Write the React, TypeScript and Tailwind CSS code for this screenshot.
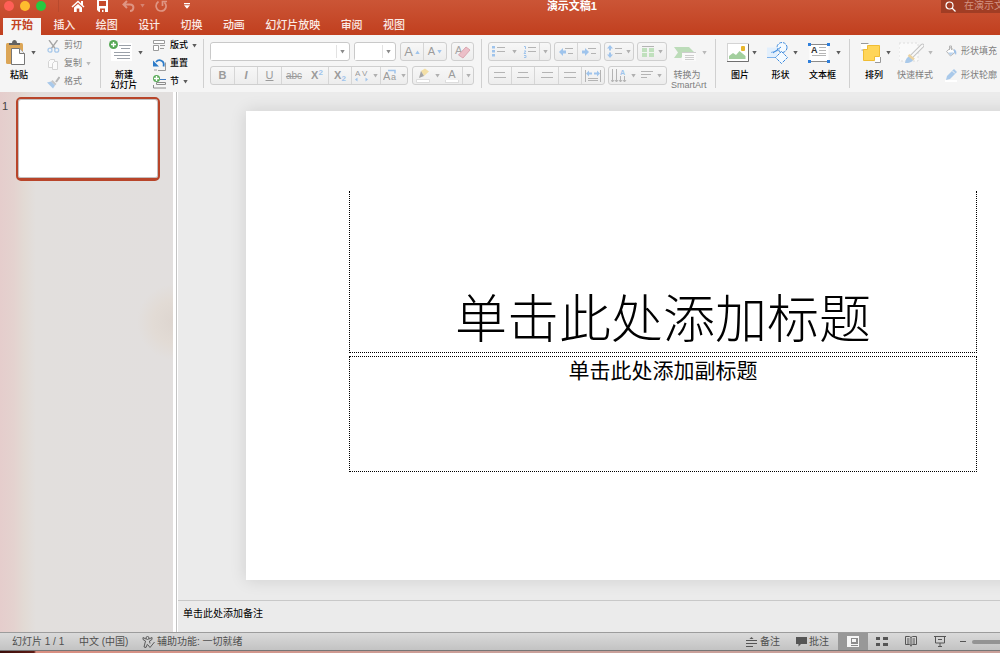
import { useState } from 'react';
import type { ReactNode } from 'react';
import clsx from 'clsx';

const TABS = ['开始', '插入', '绘图', '设计', '切换', '动画', '幻灯片放映', '审阅', '视图'];

const Caret = ({ className = 'text-[#5c5c5c]' }: { className?: string }) => (
  <svg className={clsx('shrink-0', className)} width="5" height="4" viewBox="0 0 5 4" fill="currentColor">
    <path d="M.3 0h4.400L2.500 3.600z" />
  </svg>
);

/* ---------- ribbon building blocks ---------- */

const Group = ({ className, children }: { className: string; children: ReactNode }) => (
  <div className={clsx('relative flex shrink-0 items-start', className)}>{children}</div>
);

const Divider = () => <div className="mt-[3px] h-[49px] w-px shrink-0 bg-[#d0d0d0]" />;

type BigProps = { icon: ReactNode; label: ReactNode; className?: string; disabled?: boolean };

const BigButton = ({ icon, label, className, disabled }: BigProps) => (
  <button
    disabled={disabled}
    className={clsx('flex shrink-0 flex-col items-stretch text-[9px] leading-[10px]', disabled ? 'text-[#7d7d7d]' : 'font-medium text-black', className)}
  >
    <span className="flex h-[34px] items-center justify-between">
      {icon}
      <Caret className={disabled ? 'text-[#b9b9b9]' : 'text-[#5c5c5c]'} />
    </span>
    <span className="block whitespace-nowrap pr-1 text-center">{label}</span>
  </button>
);

type SmallProps = { icon: ReactNode; label: string; caret?: boolean; disabled?: boolean; className?: string };

const SmallButton = ({ icon, label, caret, disabled, className = 'h-[18px]' }: SmallProps) => (
  <button
    disabled={disabled}
    className={clsx('flex items-center gap-1 whitespace-nowrap text-[9px]', disabled ? 'text-[#7d7d7d]' : 'font-medium text-black', className)}
  >
    {icon}
    <span>{label}</span>
    {caret && <Caret className={disabled ? 'text-[#b9b9b9]' : 'text-[#5c5c5c]'} />}
  </button>
);

const Segments = ({ className, children }: { className: string; children: ReactNode }) => (
  <div className={clsx('flex h-[19px] shrink-0 rounded-[3px] border border-[#cfcfcf] bg-linear-to-b from-[#f7f7f7] to-[#ededed]', className)}>
    {children}
  </div>
);

type SegProps = { label: string; className?: string; line?: boolean; children: ReactNode };

const Seg = ({ label, className = 'flex-1', line = true, children }: SegProps) => (
  <button
    disabled
    aria-label={label}
    className={clsx('flex items-center justify-center gap-1 text-[11px] leading-none text-[#9b9b9b]', line && 'border-r border-[#d6d6d6]', className)}
  >
    {children}
  </button>
);

const PickList = ({ label, className }: { label: string; className: string }) => (
  <div className={clsx('flex h-[19px] shrink-0 items-center rounded-[3px] border border-[#c9c9c9] bg-white pr-1', className)}>
    <select aria-label={label} className="h-4 min-w-0 flex-1 appearance-none bg-white text-[10px] outline-none" />
    <span className="mr-[3px] h-[13px] w-px bg-[#e2e2e2]" />
    <Caret className="text-[#8a8a8a]" />
  </div>
);

/* ---------- ribbon icons ---------- */

const PasteIcon = () => (
  <svg width="20" height="26" viewBox="0 0 20 26">
    <rect x="0" y="3" width="17" height="21" rx="1.5" fill="#dca657" />
    <path d="M3 5V3h3c0-4 5-4 5 0h3v2z" fill="#636363" />
    <path d="M5.500 8.500h8l5 5v11h-13z" fill="#fff" stroke="#777" />
    <path d="M13.500 8.500v5h5" fill="#eee" stroke="#777" />
  </svg>
);

const CutIcon = () => (
  <svg width="13" height="13" viewBox="0 0 13 13" fill="none">
    <path d="M2 0l6.500 9M10.500 0L4 9" stroke="#a5a5a5" strokeWidth="1.300" />
    <circle cx="3" cy="10.200" r="2" stroke="#a9c9ea" strokeWidth="1.300" />
    <circle cx="9.700" cy="10.200" r="2" stroke="#a9c9ea" strokeWidth="1.300" />
  </svg>
);

const CopyIcon = () => (
  <svg width="13" height="13" viewBox="0 0 13 13" fill="#fbfbfb" stroke="#d4d4d4">
    <path d="M1.500 3.500l2-2h4v8h-6z" />
    <path d="M5.500 5.500l2-2h3v8h-5z" />
  </svg>
);

const BrushIcon = () => (
  <svg width="13" height="13" viewBox="0 0 13 13">
    <path d="M12.500 1L9 6" stroke="#b5b5b5" strokeWidth="2" />
    <path d="M5.500 4l4 4-1.500 1.500-4-4z" fill="#c6c6c6" />
    <path d="M0 6.500l4-1L8 9.500 6 12.500z" fill="#a9c9ea" />
  </svg>
);

const Plus = ({ r = 4.5 }: { r?: number }) => (
  <g>
    <circle cx={r} cy={r} r={r} fill="#58a957" />
    <path d={`M${r} ${r - 2.5}v5M${r - 2.5} ${r}h5`} stroke="#fff" strokeWidth="1.400" />
  </g>
);

const NewSlideIcon = () => (
  <svg width="23" height="26" viewBox="0 0 23 26">
    <rect x="2" y="3" width="21" height="18" fill="#fff" />
    <path d="M10 5.500h12M12 8.500h9M5 12.500h16M5 15.500h16M8 18.500h13" stroke="#9aa0a8" />
    <Plus />
  </svg>
);

const LayoutIcon = () => (
  <svg width="13" height="12" viewBox="0 0 13 12" fill="none" stroke="#9b9b9b">
    <path d="M.5 3.500v-3h11v3z" fill="#fff" />
    <path d="M.5 5.500h5v5h-5z" fill="#fff" />
    <path d="M7 5.500h5M7 8.500h4" />
  </svg>
);

const ResetIcon = () => (
  <svg width="13" height="13" viewBox="0 0 13 13" fill="none">
    <path d="M5 12.500h7.500v-8" stroke="#9b9b9b" />
    <path d="M10.500 8.500C12 2.500 6 .5 3 4" stroke="#2d7cc9" strokeWidth="1.800" />
    <path d="M0 2.500v6h6z" fill="#2d7cc9" />
    <path d="M1 12h3" stroke="#9b9b9b" />
  </svg>
);

const SectionIcon = () => (
  <svg width="13" height="14" viewBox="0 0 13 14" fill="none">
    <path d="M7 4.500h6" stroke="#3f7cc4" />
    <path d="M3.500 7.500h9v2h-9zM.5 10v3H13" stroke="#8c8c8c" />
    <Plus r={3.5} />
  </svg>
);

const ArtIcon = () => (
  <svg className="ml-[3px]" width="23" height="15" viewBox="0 0 23 15">
    <path d="M0 1h15l6 6-2 2H10l-3 3H0l4-5.500z" fill="#bcdcb9" />
    <rect x="8" y="6" width="14" height="9" fill="#fafafa" />
    <path d="M8 6.500h14M11 9.500h9M11 11.500h9M11 13.500h9" stroke="#cdcdcd" />
  </svg>
);

const PictureIcon = () => (
  <svg width="22" height="20" viewBox="0 0 22 20">
    <rect x=".5" y=".5" width="21" height="18" fill="#fff" stroke="#d4d4d4" />
    <path d="M21.500 1v17.500H0" fill="none" stroke="#6f6f6f" />
    <path d="M2 16v-3l4-3 3 2 3.500-4 6 5v3z" fill="#a3cf9e" />
    <rect x="14" y="3" width="4" height="5" rx="1" fill="#e8b62c" />
  </svg>
);

const ShapesIcon = () => (
  <svg width="22" height="22" viewBox="0 0 22 22" fill="#f4faff" stroke="#3d8add">
    <circle cx="15" cy="5.500" r="5" strokeDasharray="3 1" />
    <path d="M0 5.500h10v10H0z" fill="#e2effc" stroke="none" />
    <path d="M0 15.500h9M4 10.500L13 8" stroke="#7db1ea" />
    <path d="M14.500 9.500l6 6-6 6-6-6z" strokeDasharray="3 1" />
    <path d="M6 11l8-6" />
  </svg>
);

const TextBoxIcon = () => (
  <svg width="22" height="20" viewBox="0 0 22 20">
    <path d="M1.500 1.500h19v17h-19z" fill="#fff" />
    <path d="M2 1.500h18M2 18.500h18" stroke="#8b8b8b" />
    <path d="M11 4.500h7M11 7.500h7M11 10.500h7M4 12.500h14" stroke="#b5b5b5" />
    <text x="3" y="10" fontSize="9" fontWeight="700" fontFamily="Liberation Sans" fill="#333">A</text>
    <path d="M0 0h3v3H0zM19 0h3v3h-3zM0 17h3v3H0zM19 17h3v3h-3z" fill="#2f7fdb" />
  </svg>
);

const ArrangeIcon = () => (
  <svg width="21" height="20" viewBox="0 0 21 20">
    <path d="M0 0h8v7H0z" fill="#fff" />
    <path d="M0 .5h7.500M.5 7h3" stroke="#999" />
    <path d="M2.500 6.500h4v-4h12v11h-5v4h-11z" fill="#ffd558" stroke="#f0bd34" />
    <path d="M14 14h6v5h-6z" fill="#fff" />
    <path d="M14 19.500h5.500V14" fill="none" stroke="#999" />
  </svg>
);

const QuickStyleIcon = () => (
  <svg className="ml-[2px]" width="25" height="22" viewBox="0 0 25 22">
    <rect x="0" y="1" width="19" height="18" fill="#fafafa" stroke="#dedede" strokeDasharray="2 2" />
    <path d="M23.500 3.500L12 15" stroke="#c4c4c4" strokeWidth="4" strokeLinecap="round" />
    <path d="M23.500 3.500L12 15" stroke="#f9f9f9" strokeWidth="2" strokeLinecap="round" />
    <path d="M6 21c1-5 3-7 6-7l2.500 2.500c0 3-4 5-8.500 4.500z" fill="#a9c9ea" />
    <path d="M9.500 13l5.500 4.500" stroke="#ecd3a0" strokeWidth="2.500" />
  </svg>
);

const FillIcon = () => (
  <svg width="12" height="13" viewBox="0 0 12 13" fill="none">
    <path d="M6 2.500l4.500 4.500-5 4L1.500 6.500z" fill="#fff" stroke="#b5b5b5" />
    <path d="M4.500 5V1h2v4" stroke="#b5b5b5" />
    <path d="M9 4c2 1 3 3 2 6l-2-3z" fill="#9cc0e8" />
    <path d="M3 7.500h6l-3.500 3z" fill="#b9d3ef" />
  </svg>
);

const OutlineIcon = () => (
  <svg width="12" height="13" viewBox="0 0 12 13">
    <path d="M0 12h12" stroke="#fff" strokeWidth="2" />
    <path d="M9 0l3 3-7 7-4 1 1-4z" fill="#a9c9ea" />
    <path d="M7.500 2L10 4.500" stroke="#f6f6f6" />
  </svg>
);

const Lines = ({ d, w = 12 }: { d: string; w?: number }) => (
  <svg width={w} height="11" viewBox={`0 0 ${w} 11`} fill="none" stroke="#b4b4b4"><path d={d} /></svg>
);

/* ---------- title bar ---------- */

const TitleBar = () => (
  <div className="flex h-3 items-center text-white">
    <div className="flex min-w-0 flex-1 items-center pl-1">
      <div className="flex gap-1.5">
        <button aria-label="关闭" className="size-2.5 rounded-full bg-[#ff5f57]" />
        <button aria-label="最小化" className="size-2.5 rounded-full bg-[#febc2e]" />
        <button aria-label="全屏" className="size-2.5 rounded-full bg-[#28c840]" />
      </div>
      <span className="ml-3 h-3 w-px bg-[#b8492d]" />
      <button aria-label="主页" className="ml-3">
        <svg width="14" height="13" viewBox="0 0 14 13" fill="#fff">
          <path d="M1 7l6-5.500L13 7" fill="none" stroke="#fff" strokeWidth="1.500" />
          <path d="M10 1h2v4h-2zM3 7.500l4-3.500 4 3.500V12H8.300V8.500H5.700V12H3z" />
        </svg>
      </button>
      <button aria-label="保存" className="ml-3">
        <svg width="11" height="12" viewBox="0 0 11 12">
          <path d="M0 0h11v12H2L0 10z" fill="#fff" />
          <path d="M2 1h7v5H2zM3 8.500h5V12H6.500V10H5v2H3z" fill="#c54b2c" />
        </svg>
      </button>
      <button aria-label="撤消" disabled className="ml-3.5 flex items-center gap-[5px] text-[#df9583]">
        <svg width="13" height="12" viewBox="0 0 13 12" fill="none" stroke="currentColor" strokeWidth="2">
          <path d="M5 1L1.500 4.500 5 8M2 4.500h6c5 0 4 6.500 0 6.500" />
        </svg>
        <Caret className="text-[#d78370]" />
      </button>
      <button aria-label="重做" disabled className="ml-2.5 text-[#df9583]">
        <svg width="13" height="12" viewBox="0 0 13 12" fill="none" stroke="currentColor" strokeWidth="1.700">
          <path d="M3.500 1.500C-1 5 1.500 11 6 11c5 0 6.500-5.500 3.500-8.500M7.500 6V1.500H12" />
        </svg>
      </button>
      <button aria-label="自定义快速访问工具栏" className="ml-4">
        <svg width="6" height="6" viewBox="0 0 6 6" fill="#fff"><path d="M0 0h6v1.200H0zM0 2.300h6L3 5.800z" /></svg>
      </button>
    </div>
    <h1 className="text-[11px] font-bold leading-3 whitespace-nowrap">演示文稿1</h1>
    <div className="flex w-[403px] justify-end">
      <label className="flex h-[13px] w-[59px] items-center gap-2 overflow-hidden bg-[#a13d24] pl-1">
        <svg className="shrink-0" width="11" height="11" viewBox="0 0 11 11" fill="none" stroke="#fff" strokeWidth="1.200">
          <circle cx="4.500" cy="4.500" r="3.500" /><path d="M7 7l3.500 3.500" />
        </svg>
        <input
          aria-label="搜索"
          placeholder="在演示文稿中搜索"
          className="h-3 w-24 shrink-0 bg-transparent text-[10px] leading-3 outline-none placeholder:text-[#d39483]"
        />
      </label>
    </div>
  </div>
);

/* ---------- ribbon ---------- */

const Ribbon = () => (
  <div className="flex h-[57px] shrink-0 items-start overflow-hidden bg-[#f5f5f5] pt-px">
    <Group className="w-[100px] gap-[11px] pl-1.5">
      <BigButton className="w-[30px]" icon={<PasteIcon />} label="粘贴" />
      <div className="flex flex-col pt-px">
        <SmallButton disabled icon={<CutIcon />} label="剪切" />
        <SmallButton disabled caret icon={<CopyIcon />} label="复制" />
        <SmallButton disabled icon={<BrushIcon />} label="格式" />
      </div>
    </Group>
    <Divider />
    <Group className="w-[102px] gap-2.5 pl-2">
      <BigButton className="w-[34px]" icon={<NewSlideIcon />} label={<>新建<br />幻灯片</>} />
      <div className="flex flex-col pt-px">
        <SmallButton caret icon={<LayoutIcon />} label="版式" />
        <SmallButton icon={<ResetIcon />} label="重置" />
        <SmallButton caret icon={<SectionIcon />} label="节" />
      </div>
    </Group>
    <Divider />
    <Group className="w-[277px] flex-col gap-[5px] pt-1.5 pl-1.5">
      <div className="flex gap-1">
        <PickList label="字体" className="w-[140px]" />
        <PickList label="字号" className="w-[42px]" />
        <Segments className="w-[47px]">
          <Seg label="增大字号"><span className="text-[13px]">A</span><Caret className="-ml-0.5 rotate-180 text-[#9fc4ec]" /></Seg>
          <Seg label="减小字号" line={false}>A<Caret className="-ml-0.5 text-[#9fc4ec]" /></Seg>
        </Segments>
        <Segments className="w-[23px]">
          <Seg label="清除格式" line={false}>
            <svg width="17" height="15" viewBox="0 0 17 15">
              <text x="1" y="10" fontSize="11" fontFamily="Liberation Sans" fill="#a5a5a5">A</text>
              <path d="M12 3l4 3-7 8-4.500-3z" fill="#ecbfc8" stroke="#dba7b1" />
            </svg>
          </Seg>
        </Segments>
      </div>
      <div className="flex gap-1">
        <Segments className="w-[198px]">
          <Seg label="加粗" className="w-6"><b>B</b></Seg>
          <Seg label="倾斜" className="w-[23px]"><i className="font-bold">I</i></Seg>
          <Seg label="下划线" className="w-6"><u>U</u></Seg>
          <Seg label="删除线" className="w-6" line={false}><s className="text-[10px]">abc</s></Seg>
          <Seg label="上标" className="w-[23px]"><span className="font-bold">X<sup className="text-[8px] text-[#9fc4ec]">2</sup></span></Seg>
          <Seg label="下标" className="w-[23px]"><span className="font-bold">X<sub className="text-[8px] text-[#9fc4ec]">2</sub></span></Seg>
          <Seg label="字符间距" className="w-[29px]">
            <svg width="14" height="13" viewBox="0 0 14 13">
              <text x="0" y="7" fontSize="8" fontFamily="Liberation Sans" fill="#9b9b9b">A</text>
              <text x="7" y="7" fontSize="8" fontFamily="Liberation Sans" fill="#9b9b9b">V</text>
              <path d="M0 10.500l2.500-2v4zM13 10.500l-2.500-2v4z" fill="#9fc4ec" />
            </svg>
            <Caret className="text-[#b0b0b0]" />
          </Seg>
          <Seg label="更改大小写" className="flex-1" line={false}>
            <svg width="14" height="13" viewBox="0 0 14 13">
              <text x="0" y="11" fontSize="11" fontFamily="Liberation Sans" fill="#9b9b9b">A</text>
              <text x="8" y="11" fontSize="9" fontFamily="Liberation Sans" fill="#9b9b9b">a</text>
              <path d="M5 1.500h7v3" fill="none" stroke="#9fc4ec" strokeWidth="1.500" />
            </svg>
            <Caret className="text-[#b0b0b0]" />
          </Seg>
        </Segments>
        <Segments className="w-[62px]">
          <Seg label="突出显示" className="w-[19px]" line={false}>
            <svg width="14" height="15" viewBox="0 0 14 15">
              <path d="M5 3l4-2.500 4 3L8 8z" fill="#f3dfa6" />
              <path d="M5 3l3 5-5 2z" fill="#a5a5a5" />
              <path d="M.5 11.500h13v3H.5z" fill="#fff" stroke="#ddd" />
            </svg>
          </Seg>
          <Seg label="突出显示颜色" className="w-2.5" line={false}><Caret className="text-[#b0b0b0]" /></Seg>
          <Seg label="字体颜色" className="w-[21px]">
            <span className="flex flex-col items-center">
              <span className="text-[11px] leading-3">A</span>
              <span className="h-[3px] w-3.5 border border-t-0 border-[#ddd] bg-white" />
            </span>
          </Seg>
          <Seg label="更多字体颜色" line={false}><Caret className="text-[#b0b0b0]" /></Seg>
        </Segments>
      </div>
    </Group>
    <Divider />
    <Group className="w-[233px] gap-1 pl-1.5">
      <div className="flex w-[179px] flex-col gap-[5px] pt-1.5">
        <div className="flex justify-between">
          <Segments className="w-[63px]">
            <Seg label="项目符号" className="w-5" line={false}>
              <svg width="14" height="11" viewBox="0 0 14 11">
                <path d="M0 0h3v2.500H0zM0 4h3v2.500H0zM0 8h3v2.500H0z" fill="#9fc4ec" />
                <path d="M5 1.500h8M5 5.500h8" stroke="#b4b4b4" />
              </svg>
            </Seg>
            <Seg label="项目符号样式" className="w-2.5" line={false}><Caret className="text-[#b0b0b0]" /></Seg>
            <Seg label="编号" className="w-[21px]">
              <svg width="13" height="13" viewBox="0 0 13 13">
                <path d="M1 1.500h1.500V4M1 6h2L1 8.500h2M1 10.500h2v2H1" fill="none" stroke="#9fc4ec" />
                <path d="M5 2.500h8M5 6.500h8" stroke="#b4b4b4" />
              </svg>
            </Seg>
            <Seg label="编号样式" line={false}><Caret className="text-[#b0b0b0]" /></Seg>
          </Segments>
          <Segments className="w-[47px]">
            <Seg label="减少缩进">
              <svg width="14" height="9" viewBox="0 0 14 9"><path d="M0 5l4-4v2.500h3v3H4V9z" fill="#9fc4ec" /><path d="M6 1.500h8M9 6.500h5" stroke="#b4b4b4" /></svg>
            </Seg>
            <Seg label="增加缩进" line={false}>
              <svg width="14" height="9" viewBox="0 0 14 9"><path d="M7 5L3 1v2.500H0v3h3V9z" fill="#9fc4ec" /><path d="M6 1.500h8M9 6.500h5" stroke="#b4b4b4" /></svg>
            </Seg>
          </Segments>
          <Segments className="w-[30px]">
            <Seg label="行距" line={false}>
              <svg width="15" height="13" viewBox="0 0 15 13"><path d="M3 0l3 3.500H4v2H2v-2H0zM3 13l3-3.500H4v-2H2v2H0z" fill="#9fc4ec" /><path d="M8 3.500h7M8 8.500h7" stroke="#b4b4b4" /></svg>
              <Caret className="text-[#b0b0b0]" />
            </Seg>
          </Segments>
          <Segments className="w-[30px]">
            <Seg label="分栏" line={false}>
              <svg width="12" height="11" viewBox="0 0 12 11"><path d="M0 .5h12" stroke="#b4b4b4" /><path d="M0 2h5v9H0zM7 2h5v9H7z" fill="#c0e0bd" /><path d="M0 6.500h12" stroke="#eef5ee" /></svg>
              <Caret className="text-[#b0b0b0]" />
            </Seg>
          </Segments>
        </div>
        <div className="flex justify-between">
          <Segments className="w-[117px]">
            <Seg label="左对齐"><Lines d="M0 2.500h11M0 7.500h12" /></Seg>
            <Seg label="居中"><Lines d="M1 2.500h10M0 7.500h12" /></Seg>
            <Seg label="右对齐"><Lines d="M1 2.500h11M0 7.500h12" /></Seg>
            <Seg label="两端对齐"><Lines d="M0 2.500h12M0 7.500h12" /></Seg>
            <Seg label="分散对齐" line={false}>
              <svg width="16" height="12" viewBox="0 0 16 12"><path d="M.5 0v12M15.500 0v12M3 8.500h10M3 10.500h10" stroke="#b4b4b4" /><path d="M1 3.500l3-3v2h3v2H4v2zM15 3.500l-3-3v2H9v2h3v2z" fill="#9fc4ec" /></svg>
            </Seg>
          </Segments>
          <Segments className="w-[59px]">
            <Seg label="文字方向" line={false}>
              <svg width="16" height="14" viewBox="0 0 16 14">
                <path d="M1.500 0v13M5.500 0v13M9.500 7v6M13.500 7v6M0 11l1.500 2L3 11M4 11l1.500 2L7 11M8 11l1.500 2 1.500-2M12 11l1.500 2 1.500-2" fill="none" stroke="#b4b4b4" />
                <text x="9" y="6" fontSize="7" fontWeight="700" fontFamily="Liberation Sans" fill="#9fc4ec">A</text>
              </svg>
              <Caret className="text-[#b0b0b0]" />
            </Seg>
            <Seg label="对齐文本" line={false}><Lines d="M0 1.500h12M0 4.500h10M0 7.500h6" /><Caret className="text-[#b0b0b0]" /></Seg>
          </Segments>
        </div>
      </div>
      <BigButton disabled className="w-9" icon={<ArtIcon />} label={<>转换为<br />SmartArt</>} />
    </Group>
    <Divider />
    <Group className="w-[133px] gap-2.5 pl-[11px]">
      <BigButton className="w-[30px]" icon={<PictureIcon />} label="图片" />
      <BigButton className="w-[31px]" icon={<ShapesIcon />} label="形状" />
      <BigButton className="w-[33px]" icon={<TextBoxIcon />} label="文本框" />
    </Group>
    <Divider />
    <Group className="pl-[11px]">
      <BigButton className="w-[30px]" icon={<ArrangeIcon />} label="排列" />
      <BigButton disabled className="ml-1.5 w-9" icon={<QuickStyleIcon />} label="快速样式" />
      <div className="ml-3 flex flex-col gap-[5px] pt-1.5">
        <SmallButton disabled caret className="h-[19px]" icon={<FillIcon />} label="形状填充" />
        <SmallButton disabled caret className="h-[19px]" icon={<OutlineIcon />} label="形状轮廓" />
      </div>
    </Group>
  </div>
);

/* ---------- status bar ---------- */

const StatusBar = () => (
  <footer className="flex h-[19px] shrink-0 items-center border-t border-b border-t-[#9c9c9c] border-b-[#777] bg-linear-to-b from-[#dadada] to-[#c3c3c3] text-[10px] text-[#4f4f4f]">
    <div className="flex min-w-0 flex-1 items-center pl-3 whitespace-nowrap">
      <span className="w-[67px]">幻灯片 1 / 1</span>
      <button className="w-[63px] text-left">中文 (中国)</button>
      <button className="flex items-center gap-0.5">
        <svg width="13" height="12" viewBox="0 0 13 12" fill="none" stroke="#5a5a5a">
          <circle cx="5.500" cy="2" r="1.500" />
          <path d="M4 3L1 1.500v2l2.500 1.500L2 11l2 .5L5.500 8M7 3l3-1.500v2L7.500 5l.5 2.500M6 9l2 2.500L12.500 6" />
        </svg>
        辅助功能: 一切就绪
      </button>
    </div>
    <div className="flex h-full w-[254px] shrink-0 items-center overflow-hidden">
      <button className="flex w-[50px] shrink-0 items-center gap-[3px]">
        <svg width="11" height="11" viewBox="0 0 11 11" stroke="#555" fill="#555"><path d="M0 4.500h11M0 7.500h11M0 10.500h7" /><path d="M3.500 3l2-2 2 2z" stroke="none" /></svg>
        备注
      </button>
      <button className="flex w-[42px] shrink-0 items-center gap-0.5">
        <svg width="11" height="10" viewBox="0 0 11 10" fill="#555"><path d="M0 0h11v7H5L2.500 9.500V7H0z" /></svg>
        批注
      </button>
      <button aria-label="普通视图" className="flex h-full w-[30px] shrink-0 items-center justify-center bg-[#989898]">
        <svg width="12" height="11" viewBox="0 0 12 11"><path d="M0 0h12v11H0z" fill="#f6f6f6" /><path d="M4 2h7v6H4zM4 9h7v1H4z" fill="#8c8c8c" /><path d="M5 3h4v3H5z" fill="#f6f6f6" /></svg>
      </button>
      <button aria-label="幻灯片浏览" className="flex w-7 shrink-0 justify-center">
        <svg width="12" height="9" viewBox="0 0 12 9" fill="#555"><path d="M0 0h4v3H0zM7 0h5v3H7zM0 6h4v3H0zM7 6h5v3H7z" /></svg>
      </button>
      <button aria-label="阅读视图" className="flex w-[30px] shrink-0 justify-center">
        <svg width="12" height="11" viewBox="0 0 12 11" fill="none" stroke="#555"><path d="M.5.5h4L6 1.500 7.500.5h4v8h-4L6 9.500l-1.500-1h-4zM6 1.500v9M2 3h2.500M2 5h2.500M2 7h2.500M7.500 3H10M7.500 5H10M7.500 7H10" /></svg>
      </button>
      <button aria-label="幻灯片放映" className="flex w-[27px] shrink-0 justify-center">
        <svg width="12" height="11" viewBox="0 0 12 11" fill="none" stroke="#555"><path d="M0 .5h12M1.500 1v6h9V1M6 7v3M4 10.500h4M4 3.500h4" /></svg>
      </button>
      <button aria-label="缩小" className="ml-[7px] h-px w-1.5 shrink-0 bg-[#555]" />
      <input type="range" aria-label="缩放" className="ml-1.5 h-1 w-40 shrink-0 appearance-none rounded-full bg-[#939393]" />
    </div>
  </footer>
);

export default function App() {
  const [tab, setTab] = useState('开始');

  return (
    <div className="flex h-screen flex-col overflow-hidden bg-[#ebebeb] font-['Liberation_Sans','Noto_Sans_CJK_SC',sans-serif]">
      <header className="shrink-0 bg-linear-to-b from-[#cb5536] to-[#c13f1e]">
        <TitleBar />
        <nav className="mt-1.5 ml-[3px] flex w-[410px] justify-between">
          {TABS.map(name => (
            <button
              key={name}
              onClick={() => setTab(name)}
              className={clsx(
                'flex h-[17px] shrink-0 items-start px-2 text-[11px] leading-[14px] whitespace-nowrap',
                tab === name ? 'bg-[#f5f5f5] font-bold text-[#c4431f]' : 'font-medium text-[#fbeae5]',
              )}
            >
              {name}
            </button>
          ))}
        </nav>
      </header>

      <Ribbon />

      <div className="flex min-h-0 flex-1">
        <aside className="flex w-[173px] shrink-0 items-start bg-[radial-gradient(circle_at_175px_230px,#ddd5cf_0,#e2dbd5_22px,transparent_38px),linear-gradient(to_right,#e5cdcc_0,#e4d2cf_14px,#e2dad4_24px,#e2dfdd_36px,#e2dfde_100%)] pt-[5px]">
          <span className="w-4 pl-[2px] text-[11px] leading-[18px] text-[#444]">1</span>
          <button aria-label="幻灯片 1" className="h-[84px] w-36 rounded-[5px] border-2 border-b-3 border-[#b8452a] bg-white inset-ring inset-ring-[#c4c0c0]" />
        </aside>
        <div className="w-[5px] shrink-0 border-x-[1px] border-l-3 border-white bg-[#c3c3c3]" />

        <main className="flex min-w-0 flex-1 flex-col">
          <div className="min-h-0 flex-1 overflow-hidden pt-[19px] pl-[68px]">
            <div className="flex aspect-video w-[834px] flex-col items-center bg-white pt-20 text-black shadow-[0_0_16px_rgba(0,0,0,0.12)]">
              <div className="flex h-[162px] w-[628px] items-end justify-center border border-t-0 border-dotted border-black">
                <h2 className="text-[52px] leading-[64px] font-light">单击此处添加标题</h2>
              </div>
              <div className="mt-[3px] h-[116px] w-[628px] border border-dotted border-black text-center">
                <p className="text-[21px] leading-7">单击此处添加副标题</p>
              </div>
            </div>
          </div>
          <input
            aria-label="备注"
            placeholder="单击此处添加备注"
            className="h-8 shrink-0 border-t border-[#c8c8c8] bg-transparent px-[5px] pb-1.5 text-[10px] outline-none placeholder:text-black"
          />
        </main>
      </div>

      <StatusBar />
      <div className="h-[2px] shrink-0 bg-[linear-gradient(to_right,#3a0d0a_0,#5e1c16_34px,#d98e80_36px,#c9a09a_50%,#c9a09a_100%)]" />
    </div>
  );
}
